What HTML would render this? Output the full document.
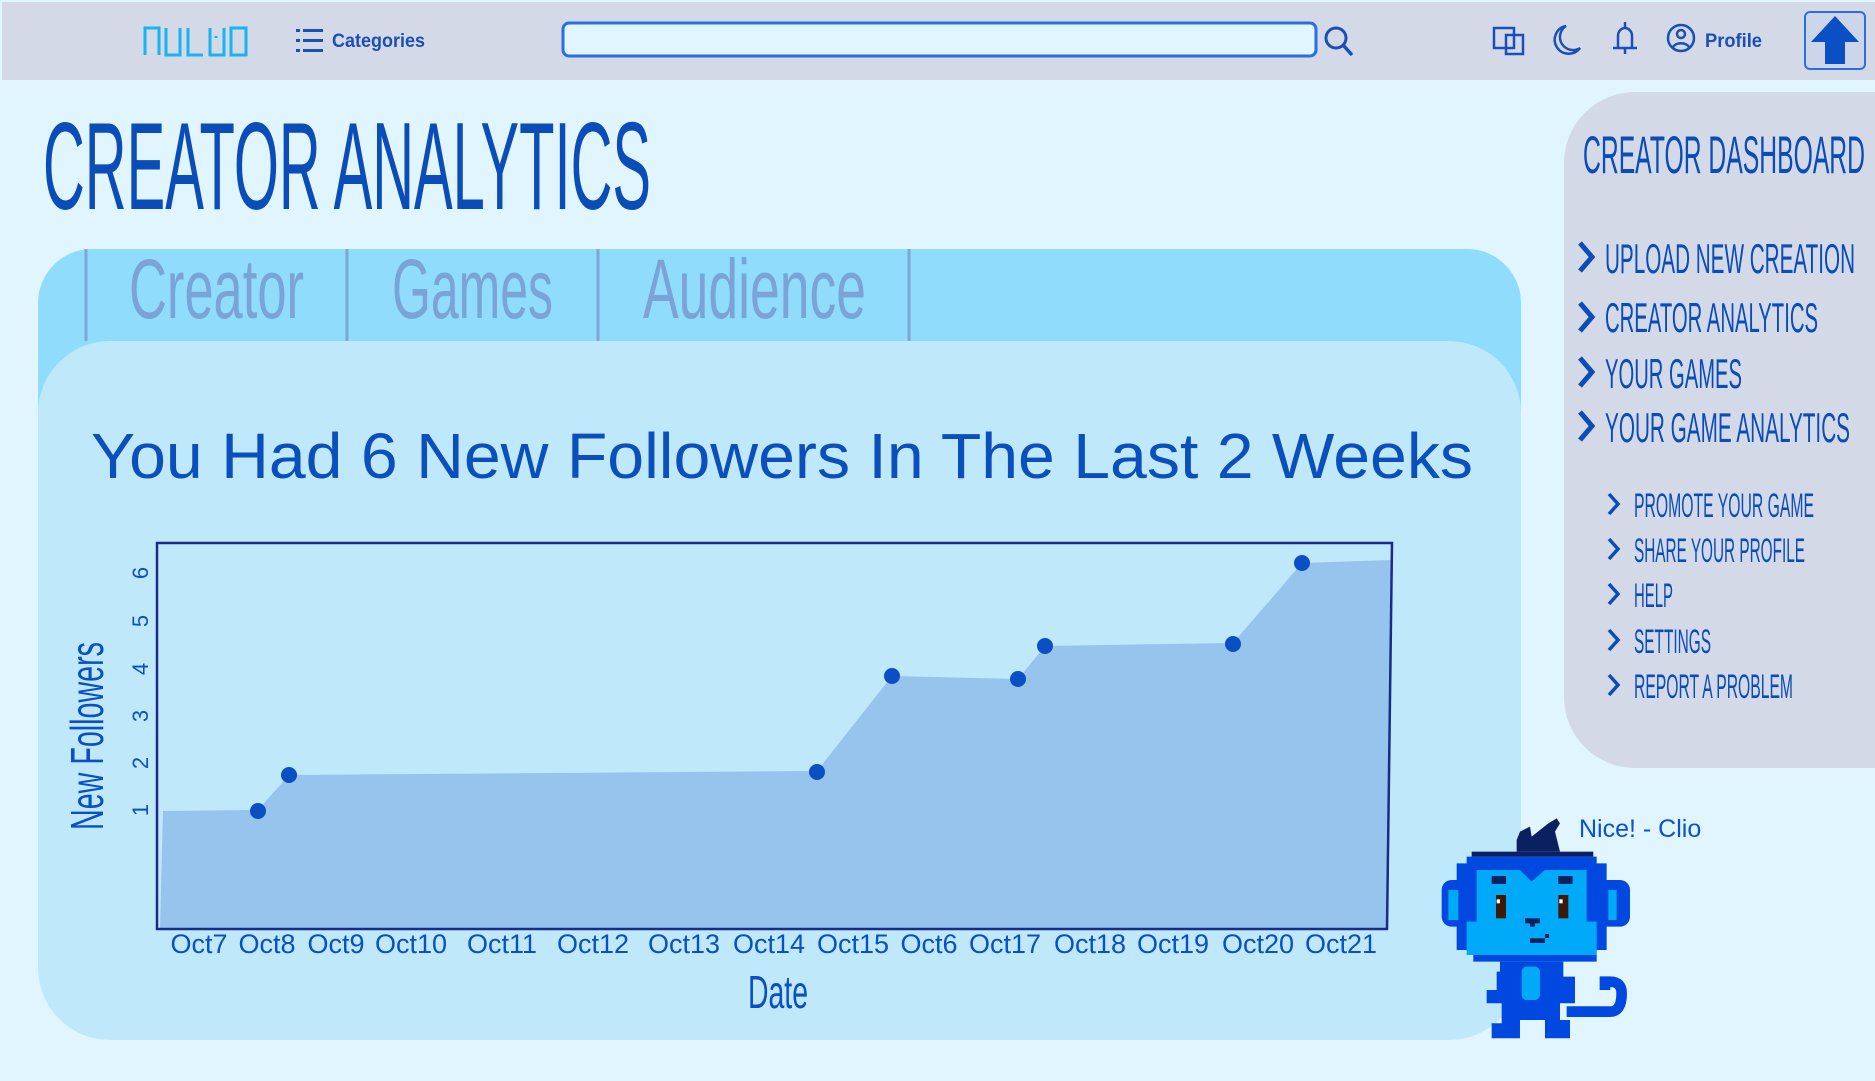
<!DOCTYPE html>
<html><head><meta charset="utf-8"><style>
html,body{margin:0;padding:0;width:1875px;height:1081px;overflow:hidden;background:#e0f5fd;}
svg{display:block}
</style></head><body>
<svg width="1875" height="1081" viewBox="0 0 1875 1081" xmlns="http://www.w3.org/2000/svg" font-family="Liberation Sans, sans-serif">
<rect x="0" y="0" width="1875" height="1081" fill="#e0f5fd"/>
<!-- header -->
<rect x="2" y="2" width="1873" height="78" fill="#d4d9e8"/>
<g fill="none" stroke="#18b4f0" stroke-width="3">
<path d="M145 55V28h14v27M166 28v27h14V28M188 28v27h15M210 28v27h14V28M216 36v2M231 28v27h15V28z"/>
</g>
<g fill="#1a4fb8">
<rect x="296" y="29" width="4" height="3"/><rect x="303" y="29" width="20" height="3"/>
<rect x="296" y="39" width="4" height="3"/><rect x="303" y="39" width="20" height="3"/>
<rect x="296" y="49" width="4" height="3"/><rect x="303" y="49" width="20" height="3"/>
</g>
<text x="332" y="47" font-size="19" font-weight="bold" fill="#1a4fb8" textLength="93" lengthAdjust="spacingAndGlyphs">Categories</text>
<rect x="563" y="23" width="753" height="33" rx="6" fill="#e0f5fd" stroke="#2a6fe0" stroke-width="3"/>
<circle cx="1336" cy="38" r="10" fill="none" stroke="#1a4fb8" stroke-width="3"/><path d="M1343 45l9 10" stroke="#1a4fb8" stroke-width="3.5"/>
<g fill="none" stroke="#1a4fb8" stroke-width="2.5">
<rect x="1494" y="28" width="20" height="20"/><path d="M1506 35h17v19h-17z"/>
<path d="M1566 26a14 14 0 1 0 14 22a12 12 0 0 1 -14 -22z"/>
<path d="M1613 48h24M1618 48v-12a7 8 0 0 1 14 0v12M1625 48v6M1625 22v5"/>
<circle cx="1681" cy="38" r="13"/><circle cx="1681" cy="34" r="4"/><path d="M1673 47a9 7 0 0 1 16 0"/>
</g>
<text x="1705" y="47" font-size="19" font-weight="bold" fill="#1a4fb8" textLength="57" lengthAdjust="spacingAndGlyphs">Profile</text>
<rect x="1805" y="12" width="60" height="57" rx="5" fill="#cdd6e8" stroke="#2a6fe0" stroke-width="2"/>
<path d="M1835 16l-24 26h14v22h20v-22h14z" fill="#0a4fc4"/>
<!-- title -->
<text x="43" y="209" font-size="124" fill="#0a4cb8" textLength="608" lengthAdjust="spacingAndGlyphs">CREATOR ANALYTICS</text>
<!-- panel -->
<rect x="38" y="249" width="1483" height="400" rx="54" fill="#8fdcfc"/>
<rect x="38" y="341" width="1483" height="699" rx="72" fill="#bfe9fb"/>
<g stroke="#7aa8d8" stroke-width="3">
<path d="M86 249v92M347 249v92M598 249v92M909 249v92"/>
</g>
<g font-size="84" fill="#7ba3d6">
<text x="129" y="318" textLength="175" lengthAdjust="spacingAndGlyphs">Creator</text>
<text x="392" y="318" textLength="161" lengthAdjust="spacingAndGlyphs">Games</text>
<text x="643" y="318" textLength="223" lengthAdjust="spacingAndGlyphs">Audience</text>
</g>
<text x="91" y="478" font-size="64" fill="#0b4fbd" textLength="1382" lengthAdjust="spacingAndGlyphs">You Had 6 New Followers In The Last 2 Weeks</text>
<!-- chart -->
<polygon points="163,811 258,810 289,775 817,771 892,676 1018,679 1045,646 1233,643 1302,563 1392,560 1388,929 160,929" fill="#96c4ec"/>
<path d="M157 543V929H1387L1392 543Z" fill="none" stroke="#1a2a8a" stroke-width="2.5"/>
<g fill="#0a4fc4">
<circle cx="258" cy="811" r="8"/><circle cx="289" cy="775" r="8"/><circle cx="817" cy="772" r="8"/>
<circle cx="892" cy="676" r="8"/><circle cx="1018" cy="679" r="8"/><circle cx="1045" cy="646" r="8"/>
<circle cx="1233" cy="644" r="8"/><circle cx="1302" cy="563" r="8"/>
</g>
<g font-size="22" fill="#0a4fc4">
<text transform="translate(148,810) rotate(-90)" text-anchor="middle">1</text>
<text transform="translate(148,763) rotate(-90)" text-anchor="middle">2</text>
<text transform="translate(148,716) rotate(-90)" text-anchor="middle">3</text>
<text transform="translate(148,669) rotate(-90)" text-anchor="middle">4</text>
<text transform="translate(148,621) rotate(-90)" text-anchor="middle">5</text>
<text transform="translate(148,573) rotate(-90)" text-anchor="middle">6</text>
</g>
<text transform="translate(103,830) rotate(-90)" font-size="46" fill="#0a4fc4" textLength="188" lengthAdjust="spacingAndGlyphs">New Followers</text>
<g font-size="27" fill="#0a4fc4" text-anchor="middle">
<text x="199" y="953">Oct7</text><text x="267" y="953">Oct8</text><text x="336" y="953">Oct9</text>
<text x="411" y="953">Oct10</text><text x="502" y="953">Oct11</text><text x="593" y="953">Oct12</text>
<text x="684" y="953">Oct13</text><text x="769" y="953">Oct14</text><text x="853" y="953">Oct15</text>
<text x="929" y="953">Oct6</text><text x="1005" y="953">Oct17</text><text x="1090" y="953">Oct18</text>
<text x="1173" y="953">Oct19</text><text x="1258" y="953">Oct20</text><text x="1341" y="953">Oct21</text>
</g>
<text x="748" y="1008" font-size="46" fill="#0a4fc4" textLength="60" lengthAdjust="spacingAndGlyphs">Date</text>
<!-- sidebar -->
<path d="M1635 92H1875V768H1635A71 71 0 0 1 1564 697V163A71 71 0 0 1 1635 92Z" fill="#d4d9e8"/>
<text x="1583" y="173" font-size="53" fill="#0a4cb8" textLength="282" lengthAdjust="spacingAndGlyphs">CREATOR DASHBOARD</text>
<g fill="none" stroke="#0a4cb8" stroke-width="5">
<path d="M1580 243l12 14l-12 14M1580 303l12 14l-12 14M1580 358l12 14l-12 14M1580 412l12 14l-12 14"/>
</g>
<g fill="none" stroke="#0a4cb8" stroke-width="3.5">
<path d="M1609 494l9 10l-9 10M1609 539l9 10l-9 10M1609 584l9 10l-9 10M1609 630l9 10l-9 10M1609 675l9 10l-9 10"/>
</g>
<g font-size="42" fill="#0a4cb8">
<text x="1605" y="273" textLength="250" lengthAdjust="spacingAndGlyphs">UPLOAD NEW CREATION</text>
<text x="1605" y="332" textLength="213" lengthAdjust="spacingAndGlyphs">CREATOR ANALYTICS</text>
<text x="1605" y="388" textLength="137" lengthAdjust="spacingAndGlyphs">YOUR GAMES</text>
<text x="1605" y="442" textLength="245" lengthAdjust="spacingAndGlyphs">YOUR GAME ANALYTICS</text>
</g>
<g font-size="34" fill="#0a4cb8">
<text x="1634" y="517" textLength="180" lengthAdjust="spacingAndGlyphs">PROMOTE YOUR GAME</text>
<text x="1634" y="562" textLength="171" lengthAdjust="spacingAndGlyphs">SHARE YOUR PROFILE</text>
<text x="1634" y="607" textLength="39" lengthAdjust="spacingAndGlyphs">HELP</text>
<text x="1634" y="653" textLength="77" lengthAdjust="spacingAndGlyphs">SETTINGS</text>
<text x="1634" y="698" textLength="159" lengthAdjust="spacingAndGlyphs">REPORT A PROBLEM</text>
</g>
<text x="1579" y="837" font-size="25" fill="#0a4fd8">Nice!  - Clio</text>
<!-- monkey -->
<g transform="translate(1420,790) scale(0.3333)">
<polygon points="290,150 300,125 330,110 335,140 360,120 385,100 410,85 420,100 405,125 420,185 290,185" fill="#0a2060"/>
<rect x="155" y="185" width="365" height="15" fill="#0a2060"/>
<rect x="65" y="270" width="565" height="140" rx="30" fill="#0048e0"/>
<polygon points="140,200 530,200 530,220 560,220 560,480 530,480 530,515 160,515 160,480 110,480 110,220 140,220" fill="#0048e0"/>
<rect x="85" y="300" width="30" height="90" fill="#00aaf8"/>
<rect x="565" y="300" width="25" height="90" fill="#00aaf8"/>
<polygon points="170,240 300,240 335,275 375,240 500,240 500,395 530,395 530,495 140,495 140,395 170,395" fill="#00aaf8"/>
<rect x="215" y="258" width="43" height="24" fill="#0a2060"/>
<rect x="415" y="258" width="43" height="24" fill="#0a2060"/>
<rect x="228" y="315" width="30" height="70" fill="#3a1a08"/>
<rect x="415" y="315" width="30" height="70" fill="#3a1a08"/>
<rect x="230" y="328" width="10" height="12" fill="#fff"/><rect x="418" y="328" width="10" height="12" fill="#fff"/>
<rect x="315" y="385" width="45" height="15" fill="#0a2060"/><rect x="330" y="398" width="15" height="12" fill="#0a2060"/>
<rect x="330" y="445" width="45" height="14" fill="#0a2060"/><rect x="375" y="432" width="12" height="12" fill="#0a2060"/>
<polygon points="240,515 430,515 430,560 465,560 465,640 420,640 420,690 450,690 450,745 375,745 375,690 300,690 300,745 215,745 215,700 245,700 245,640 200,640 200,600 230,600 230,545 240,545" fill="#0048e0"/>
<rect x="305" y="530" width="55" height="100" rx="15" fill="#00aaf8"/>
<path d="M440 665H570Q605 665 605 610Q605 575 570 575H555V600" fill="none" stroke="#0048e0" stroke-width="32"/>
</g>
</svg>
</body></html>
